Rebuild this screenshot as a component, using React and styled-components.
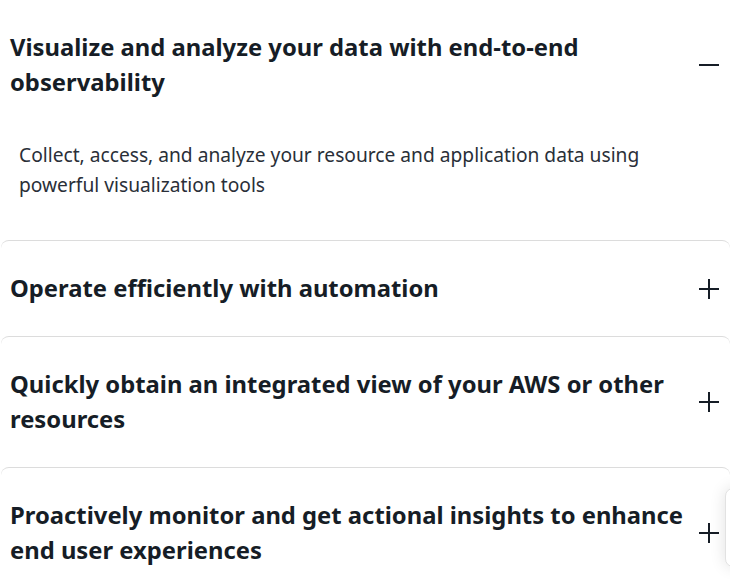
import React, { useState } from "react";
import styled, { createGlobalStyle } from "styled-components";

const items = [
  {
    title: "Visualize and analyze your data with end-to-end observability",
    body: "Collect, access, and analyze your resource and application data using powerful visualization tools",
  },
  { title: "Operate efficiently with automation", body: "" },
  { title: "Quickly obtain an integrated view of your AWS or other resources", body: "" },
  {
    title: "Proactively monitor and get actional insights to enhance end user experiences",
    body: "",
  },
];

export default function App() {
  const [open, setOpen] = useState(0);
  return (
    <>
      <GlobalStyle />
      <List>
        {items.map((item, i) => (
          <Card key={i} $first={i === 0}>
            <Header onClick={() => setOpen(open === i ? -1 : i)}>
              <Title>{item.title}</Title>
              <Icon viewBox="0 0 22 22" aria-hidden="true">
                <path d="M1 11h20" />
                {open !== i && <path d="M11 1v20" />}
              </Icon>
            </Header>
            {open === i && <Panel>{item.body}</Panel>}
          </Card>
        ))}
      </List>
      <Floating />
    </>
  );
}

const GlobalStyle = createGlobalStyle`
  body {
    margin: 0;
    background: #fff;
    font-family: "Noto Sans", "Open Sans", sans-serif;
    overflow: hidden;
  }
`;

const List = styled.div`
  display: flex;
  flex-direction: column;
  padding: 0 0 0 1px;
  margin-top: -1px;
`;

const Card = styled.div`
  border-top: 1px solid ${(p) => (p.$first ? "transparent" : "#dcdcdc")};
  border-radius: 8px;
`;

const Header = styled.button`
  display: flex;
  align-items: center;
  justify-content: space-between;
  gap: 8px;
  width: 100%;
  padding: 30px 10px 30px 9px;
  border: 0;
  background: none;
  text-align: left;
  cursor: pointer;
  font: inherit;
`;

const Title = styled.span`
  flex: 1;
  font-size: 23.8px;
  line-height: 35px;
  font-weight: 700;
  color: #161d26;
`;

const Icon = styled.svg`
  width: 22px;
  height: 22px;
  flex-shrink: 0;
  stroke: #161d26;
  stroke-width: 2;
  fill: none;
`;

const Panel = styled.div`
  padding: 10px 10px 40px 18px;
  font-size: 19.2px;
  line-height: 30px;
  color: #2a2f38;
`;

const Floating = styled.div`
  position: fixed;
  left: 725px;
  top: 488px;
  width: 40px;
  height: 77px;
  background: #fff;
  border: 1px solid #e2e2e2;
  border-radius: 8px;
  box-shadow: 0 0 16px rgba(0, 0, 0, 0.12);
`;
